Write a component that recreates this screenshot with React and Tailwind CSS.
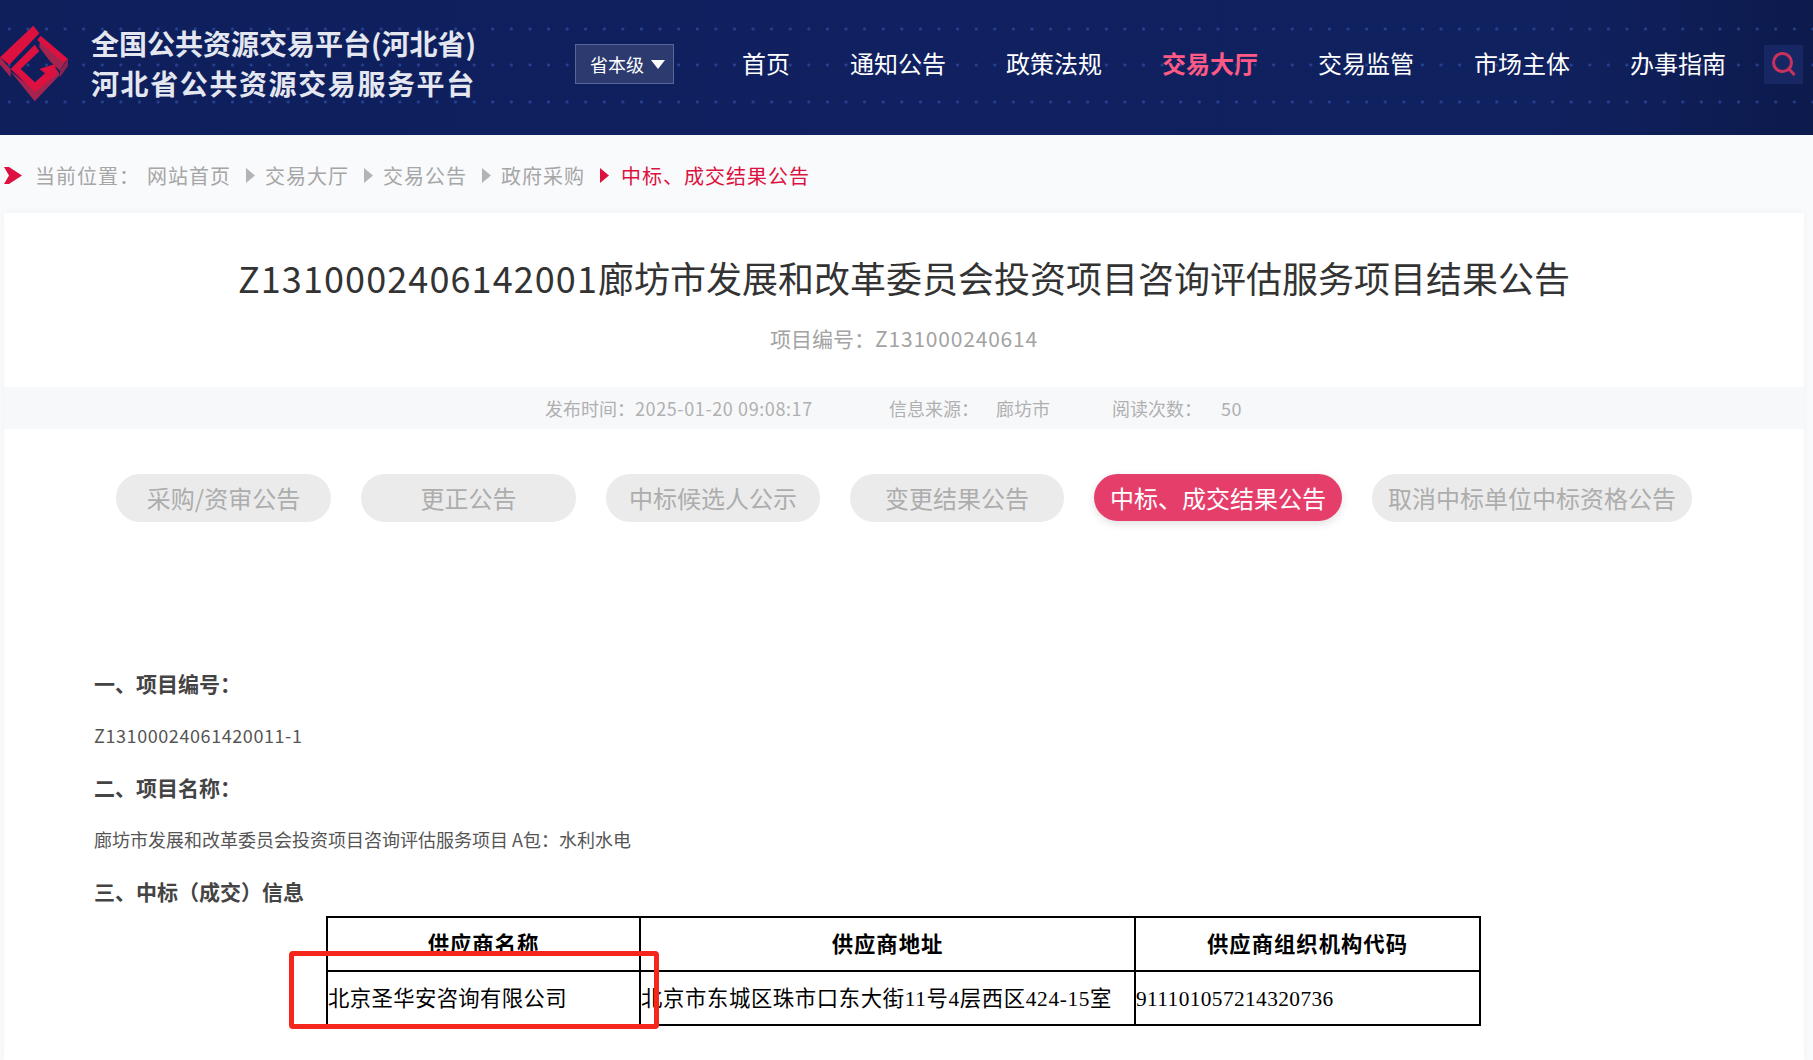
const navItems = ['首页', '通知公告', '政策法规', '交易大厅', '交易监管', '市场主体', '办事指南']
const crumbs = ['网站首页', '交易大厅', '交易公告', '政府采购']
const tabs = [
  { label: '采购/资审公告', cls: 'w-[215px]' },
  { label: '更正公告', cls: 'w-[215px]' },
  { label: '中标候选人公示', cls: 'w-[214px]' },
  { label: '变更结果公告', cls: 'w-[214px]' },
  { label: '中标、成交结果公告', active: true, cls: 'w-[248px]' },
  { label: '取消中标单位中标资格公告', cls: 'w-[320px]' },
]

function Logo() {
  return (
    <svg width="68" height="80" viewBox="0 0 204 240" className="shrink-0">
      <polygon points="0,100 0,122 32,160 32,135" fill="#a3244f" />
      <polygon points="30,140 104,232 180,152 170,135 105,200" fill="#a3244f" />
      <polygon points="180,140 180,160 204,125 204,105" fill="#8f2150" />
      <polygon points="100,5 118,28 28,122 0,100" fill="#dc1140" />
      <polygon points="120,40 196,112 180,140 150,112 118,70" fill="#a3244f" />
      <polygon points="122,35 204,105 192,118 112,48" fill="#dc1140" />
      <polygon points="104,62 118,82 62,135 105,175 135,148 118,135 165,120 170,150 105,205 32,135" fill="#dc1140" />
    </svg>
  )
}

function Dots({ top }) {
  return (
    <div
      className="absolute left-0 right-0 h-[8px] bg-[radial-gradient(circle,#3558b4_0,#3558b4_1px,transparent_2px)] bg-[length:18.6px_8px] opacity-60"
      style={{ top }}
    />
  )
}

function Triangle({ color }) {
  return (
    <svg width="9" height="15" viewBox="0 0 9 15" className="shrink-0">
      <polygon points="0,0 9,7.5 0,15" fill={color} />
    </svg>
  )
}

function Header() {
  return (
    <header className="relative flex h-[135px] items-center overflow-hidden bg-[linear-gradient(90deg,#0e1f5c_0%,#102060_50%,#10215f_85%,#0c1a4c_100%)] pb-[7px]">
      <Dots top={25} />
      <Dots top={61} />
      <Dots top={98} />
      <div className="relative flex w-full items-center">
        <Logo />
        <div className="ml-[23px] mt-[-2px] w-[385px] whitespace-nowrap text-[28px] font-bold leading-[40px] text-[#e4e7f0]">
          <div>全国公共资源交易平台(河北省)</div>
          <div className="tracking-[1.6px]">河北省公共资源交易服务平台</div>
        </div>
        <div className="ml-[99px] flex h-[40px] w-[99px] items-center border border-[#5a6794] bg-[#2c3a70] pl-[14px] text-[18px] text-white">
          <span>省本级</span>
          <svg width="14" height="9" viewBox="0 0 14 9" className="ml-[7px]">
            <polygon points="0,0 14,0 7,9" fill="#fff" />
          </svg>
        </div>
        <nav className="ml-[68px] mt-[-2px] flex gap-[60px] text-[24px] text-white">
          {navItems.map((item) => (
            <a key={item} className={item === '交易大厅' ? 'font-bold text-[#ff5a85]' : ''}>
              {item}
            </a>
          ))}
        </nav>
        <div className="ml-[38px] flex h-[39px] w-[39px] items-center justify-center bg-[#172763]">
          <svg width="26" height="24" viewBox="0 0 26 24" fill="none" stroke="#c9325f" strokeWidth="3">
            <circle cx="11.5" cy="10.5" r="9" />
            <path d="M18.5 17.5 L23.5 23" />
          </svg>
        </div>
      </div>
    </header>
  )
}

function Breadcrumb() {
  return (
    <div className="flex h-[78px] items-center pl-[4px] pt-[3px] text-[20px] tracking-[1px] text-[#a6a6a6]">
      <svg width="18" height="17" viewBox="0 0 18 17" className="shrink-0">
        <polygon points="0,0 5,0 18,8.5 5,17 0,17 5,8.5" fill="#dc1140" />
      </svg>
      <span className="ml-[13px]">当前位置：</span>
      {crumbs.map((c, i) => (
        <div key={c} className="flex items-center">
          <span className={i === 0 ? 'ml-[7px]' : 'ml-[10px]'}>{c}</span>
          <span className="ml-[15px]">
            <Triangle color={i === crumbs.length - 1 ? '#dc1140' : '#b4b4b4'} />
          </span>
        </div>
      ))}
      <span className="ml-[12px] text-[#dc1140]">中标、成交结果公告</span>
    </div>
  )
}

function ResultTable() {
  return (
    <div className="relative ml-[232px] mt-[-1px] w-[1153px] text-[21.33px] leading-none tracking-[0.4px] text-black [font-family:'Liberation_Serif','Noto_Sans_CJK_SC',serif]">
      <table className="w-full table-fixed border-collapse">
        <colgroup>
          <col className="w-[313px]" />
          <col className="w-[495px]" />
          <col className="w-[345px]" />
        </colgroup>
        <tbody>
          <tr className="h-[54px] font-bold tracking-[1px]">
            <td className="border-2 border-black pt-[3px] text-center">供应商名称</td>
            <td className="border-2 border-black pt-[3px] text-center">供应商地址</td>
            <td className="border-2 border-black pt-[3px] text-center">供应商组织机构代码</td>
          </tr>
          <tr className="h-[54px]">
            <td className="border-2 border-black pt-[3px]">北京圣华安咨询有限公司</td>
            <td className="border-2 border-black pt-[3px] tracking-[0.65px]">北京市东城区珠市口东大街11号4层西区424-15室</td>
            <td className="border-2 border-black pt-[3px]">911101057214320736</td>
          </tr>
        </tbody>
      </table>
      <div className="absolute left-[-37px] top-[35px] h-[78px] w-[370px] rounded-[4px] border-[5px] border-[#f5261b]" />
    </div>
  )
}

export default function App() {
  return (
    <div className="h-[1060px] overflow-hidden bg-[#f9fafc] [font-family:'Noto_Sans_CJK_SC','Noto_Sans',sans-serif]">
      <Header />
      <Breadcrumb />
      <main className="ml-[4px] h-[847px] w-[1800px] bg-white shadow-[0_0_8px_rgba(0,0,0,0.04)]">
        <h1 className="pt-[39px] text-center text-[36px] font-normal leading-[50px] text-[#333]">
          <span className="tracking-[1.1px]">Z1310002406142001</span>廊坊市发展和改革委员会投资项目咨询评估服务项目结果公告
        </h1>
        <p className="mt-[22px] text-center text-[21px] leading-[28px] text-[#a3a3a3]">
          项目编号：<span className="tracking-[0.8px]">Z131000240614</span>
        </p>
        <div className="mt-[35px] flex h-[42px] items-center bg-[#f7f8fa] pl-[541px] text-[18px] text-[#b0b0b0]">
          <span className="w-[344px] whitespace-nowrap">
            发布时间：<span className="tracking-[0.6px]">2025-01-20 09:08:17</span>
          </span>
          <span className="w-[107px]">信息来源：</span>
          <span className="w-[116px]">廊坊市</span>
          <span className="w-[109px]">阅读次数：</span>
          <span className="tracking-[0.6px]">50</span>
        </div>
        <div className="mt-[45px] flex justify-center gap-[30px]">
          {tabs.map((t) => (
            <div
              key={t.label}
              className={`flex items-center justify-center rounded-[24px] text-[24px] ${t.cls} ${
                t.active
                  ? 'h-[47px] bg-[#e53e6b] text-white shadow-[0_3px_8px_rgba(0,0,0,0.12)]'
                  : 'h-[48px] bg-[#ebebeb] text-[#adadad]'
              }`}
            >
              {t.label}
            </div>
          ))}
        </div>
        <div className="mt-[135px] px-[90px] leading-[52px] text-[#555]">
          <p className="text-[21px] font-bold text-[#444]">一、项目编号：</p>
          <p className="text-[18px] tracking-[0.58px]">Z13100024061420011-1</p>
          <p className="text-[21px] font-bold text-[#444]">二、项目名称：</p>
          <p className="text-[18px]">廊坊市发展和改革委员会投资项目咨询评估服务项目 A包：水利水电</p>
          <p className="text-[21px] font-bold text-[#444]">三、中标（成交）信息</p>
          <ResultTable />
        </div>
      </main>
    </div>
  )
}
